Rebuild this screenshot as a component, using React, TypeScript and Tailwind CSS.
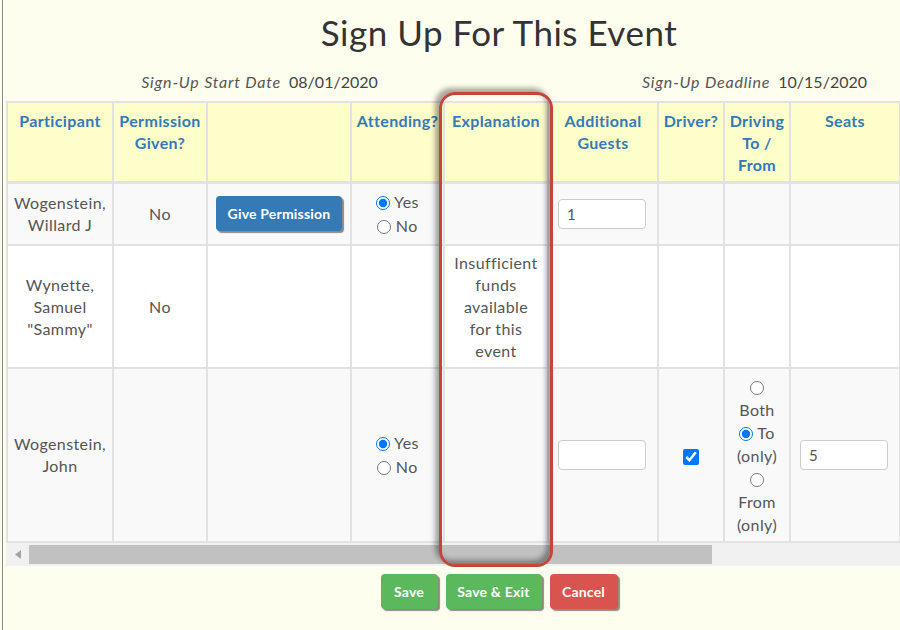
import React from "react";

const headBlue = "text-[#3579b8]";

function Radio({ checked = false }: { checked?: boolean }) {
  return (
    <input
      type="radio"
      defaultChecked={checked}
      className="w-[14px] h-[14px] m-0 align-[-2px]"
    />
  );
}

export default function App() {
  const th =
    "border-2 border-[#e2e2e2] border-b-[3px] align-top pt-[7px] px-1 text-center font-bold text-[16px] leading-[22px] tracking-[0.35px] " +
    headBlue;
  const td =
    "border-2 border-[#e2e2e2] align-middle text-center px-1 text-[16px] leading-[22px] tracking-[0.4px] text-[#555]";
  const inp =
    "w-[88px] h-[30px] rounded-[4px] border border-[#ccc] bg-white px-[8px] text-[15px] text-[#555] outline-none";
  const btn =
    "h-[35px] rounded-[4px] text-white text-[14px] font-bold tracking-[0.2px] shadow-[2px_2px_1px_rgba(0,0,0,0.45)]";
  return (
    <div
      className="relative w-[900px] h-[630px] overflow-hidden bg-[#fefeee]"
      style={{ fontFamily: "Lato, 'Open Sans', sans-serif" }}
    >
      <div className="absolute left-[2px] top-0 bottom-0 w-[1px] bg-[#8a8a8a]" />
      <div className="w-[986px] ml-[6px]">
        <h1 className="mt-[12px] text-center text-[35px] leading-[40px] tracking-[0.5px] text-[#333]">
          Sign Up For This Event
        </h1>
        <div className="mt-[19px] grid grid-cols-2 text-[16px] leading-[22px] text-[#444]">
          <div className="text-center pl-[14px]">
            <span className="italic text-[#555] tracking-[0.8px]">Sign-Up Start Date</span>
            <span className="ml-[8px]">08/01/2020</span>
          </div>
          <div className="text-center pl-[18px]">
            <span className="italic text-[#555] tracking-[0.8px]">Sign-Up Deadline</span>
            <span className="ml-[8px]">10/15/2020</span>
          </div>
        </div>
        <div className="mt-[8px] w-[986px] overflow-hidden">
          <table className="table-fixed border-collapse w-[1100px]">
            <colgroup>
              <col className="w-[106px]" />
              <col className="w-[94px]" />
              <col className="w-[144px]" />
              <col className="w-[93px]" />
              <col className="w-[104px]" />
              <col className="w-[110px]" />
              <col className="w-[66px]" />
              <col className="w-[66px]" />
              <col className="w-[110px]" />
              <col className="w-[207px]" />
            </colgroup>
            <thead>
              <tr className="bg-[#fefecb] h-[80px]">
                <th className={th}>Participant</th>
                <th className={th}>
                  Permission
                  <br />
                  Given?
                </th>
                <th className={th}></th>
                <th className={th}>Attending?</th>
                <th className={th}>Explanation</th>
                <th className={th}>
                  Additional
                  <br />
                  Guests
                </th>
                <th className={th}>Driver?</th>
                <th className={th}>
                  Driving
                  <br />
                  To /
                  <br />
                  From
                </th>
                <th className={th}>Seats</th>
                <th className={th}></th>
              </tr>
            </thead>
            <tbody>
              <tr className="bg-[#f9f9f9] h-[63px]">
                <td className={td}>
                  Wogenstein,
                  <br />
                  Willard J
                </td>
                <td className={td}>No</td>
                <td className={td + " text-left pl-[8px]"}>
                  <button className={btn + " w-[126px] bg-[#337ab7]"}>Give Permission</button>
                </td>
                <td className={td}>
                  <div className="leading-[24px]">
                    <Radio checked /> <span>Yes</span>
                  </div>
                  <div className="leading-[24px]">
                    <Radio /> <span>No</span>
                  </div>
                </td>
                <td className={td}></td>
                <td className={td + " text-left pl-[9px]"}>
                  <input defaultValue="1" className={inp} />
                </td>
                <td className={td}></td>
                <td className={td}></td>
                <td className={td}></td>
                <td className={td}></td>
              </tr>
              <tr className="bg-white h-[123px]">
                <td className={td}>
                  Wynette,
                  <br />
                  Samuel
                  <br />
                  "Sammy"
                </td>
                <td className={td}>No</td>
                <td className={td}></td>
                <td className={td}></td>
                <td className={td}>
                  Insufficient
                  <br />
                  funds
                  <br />
                  available
                  <br />
                  for this
                  <br />
                  event
                </td>
                <td className={td}></td>
                <td className={td}></td>
                <td className={td}></td>
                <td className={td}></td>
                <td className={td}></td>
              </tr>
              <tr className="bg-[#f9f9f9] h-[174px]">
                <td className={td}>
                  Wogenstein,
                  <br />
                  John
                </td>
                <td className={td}></td>
                <td className={td}></td>
                <td className={td}>
                  <div className="leading-[24px]">
                    <Radio checked /> <span>Yes</span>
                  </div>
                  <div className="leading-[24px]">
                    <Radio /> <span>No</span>
                  </div>
                </td>
                <td className={td}></td>
                <td className={td + " text-left pl-[9px]"}>
                  <input className={inp} />
                </td>
                <td className={td}>
                  <input type="checkbox" defaultChecked className="w-4 h-4 m-0 align-middle" />
                </td>
                <td className={td + " leading-[23px]"}>
                  <div>
                    <Radio />
                  </div>
                  <div>Both</div>
                  <div>
                    <Radio checked /> To
                  </div>
                  <div>(only)</div>
                  <div>
                    <Radio />
                  </div>
                  <div>From</div>
                  <div>(only)</div>
                </td>
                <td className={td + " text-left pl-[9px]"}>
                  <input defaultValue="5" className={inp} />
                </td>
                <td className={td}></td>
              </tr>
            </tbody>
          </table>
          <div className="flex h-[23px] bg-[#f1f1f1] items-center">
            <div className="w-[23px] h-full flex items-center justify-center">
              <svg width="6" height="9" viewBox="0 0 6 9">
                <path d="M6 0 L0 4.5 L6 9 Z" fill="#a3a3a3" />
              </svg>
            </div>
            <div className="w-[683px] h-[19px] bg-[#c1c1c1]" />
          </div>
        </div>
        <div className="mt-[8px] flex justify-center gap-[8px]">
          <button className={btn + " w-[57px] bg-[#5cb85c]"}>Save</button>
          <button className={btn + " w-[96px] bg-[#5cb85c]"}>Save &amp; Exit</button>
          <button className={btn + " w-[68px] bg-[#d9534f]"}>Cancel</button>
        </div>
      </div>
      <div className="absolute left-[439px] top-[92px] w-[114px] h-[475px] rounded-[16px] border-[3px] border-[#c4453a] shadow-[-4px_-4px_5px_rgba(0,0,0,0.35),inset_-4px_-4px_5px_rgba(0,0,0,0.35)]" />
    </div>
  );
}
